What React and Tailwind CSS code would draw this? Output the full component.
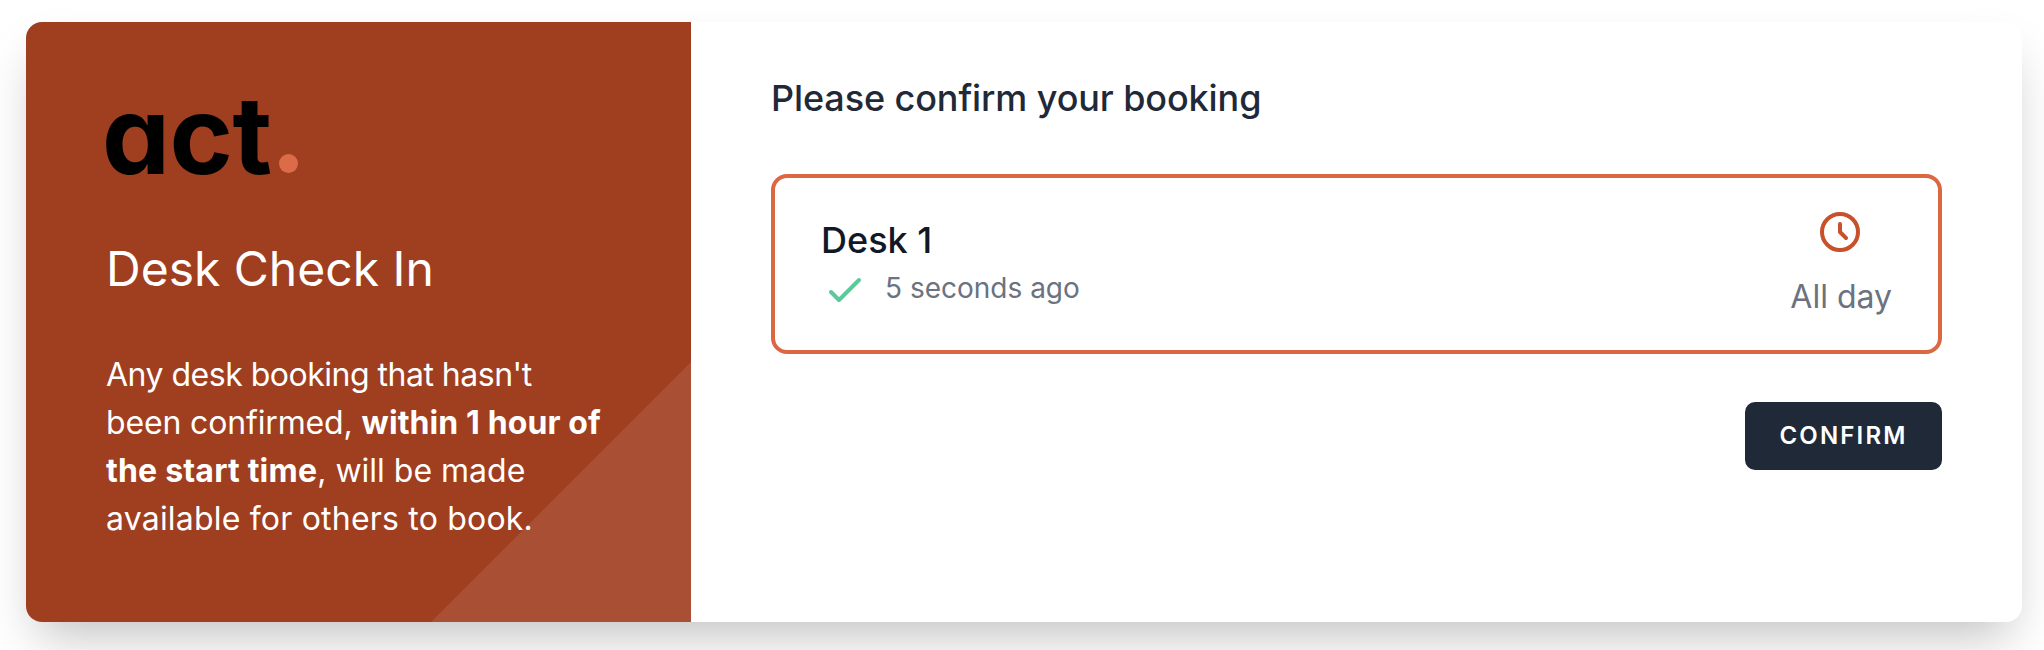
export default function App() {
  return (
    <div className="min-h-[650px] bg-white pt-[22px] pl-[26px] pr-[22px] font-['Inter',sans-serif] overflow-hidden">
      <div className="flex h-[600px] rounded-2xl bg-white shadow-[0_25px_50px_-12px_rgba(0,0,0,0.25)] overflow-hidden">
        {/* left panel */}
        <div className="relative w-[665px] shrink-0 bg-[#a03e20] pl-[80px] text-white">
          <svg className="absolute bottom-0 right-0" width="260" height="260" viewBox="0 0 260 260">
            <polygon points="0,260 260,0 260,260" fill="#a84f34" />
          </svg>
          <div className="relative">
            <div className="flex items-end h-[166px] ml-[-4px]">
              <span className="text-[108px] leading-[108px] font-bold text-black tracking-[-0.005em] [font-feature-settings:'cv11'] mb-[-1px]">act</span>
              <span className="ml-[7px] mb-[15px] h-[19px] w-[19px] rounded-full bg-[#dc6b4a]" />
            </div>
            <h1 className="mt-[53px] text-[48px] leading-[56px] font-normal">Desk Check In</h1>
            <p className="mt-[54px] w-[540px] text-[32px] leading-[48px]">
              <span className="tracking-[-0.5px]">Any desk booking that hasn't</span>
              <br />
              <span className="tracking-[-0.15px]">been confirmed,</span> <strong className="font-bold tracking-[0.1px]">within 1 hour of</strong>
              <br />
              <strong className="font-bold tracking-[0.2px]">the start time</strong>, will be made
              <br />
              <span className="tracking-[0.2px]">available for others to book.</span>
            </p>
          </div>
        </div>

        {/* right panel */}
        <div className="flex-1 flex flex-col pl-[80px] pr-[80px] pt-[52px]">
          <h2 className="text-[36px] leading-[48px] font-medium text-[#1f2937] tracking-[-0.1px]">Please confirm your booking</h2>
          <div className="mt-[52px] h-[180px] flex items-center justify-between rounded-2xl border-[4px] border-[#dc6843] pl-[46px] pr-[46px]">
            <div>
              <div className="mt-[3px] text-[36px] leading-[44px] font-medium text-[#111827]">Desk 1</div>
              <div className="flex items-center">
                <svg className="w-12 h-12 mt-[4px] text-[#5cc99b]" fill="none" viewBox="0 0 24 24" stroke="currentColor" strokeWidth="2" strokeLinecap="round" strokeLinejoin="round">
                  <path d="M5 13l4 4L19 7" />
                </svg>
                <span className="ml-[16px] mt-[1px] text-[28px] leading-[36px] text-[#6b7280]">5 seconds ago</span>
              </div>
            </div>
            <div className="flex flex-col items-center mt-[-2px]">
              <svg className="w-12 h-12 text-[#c8502a] mr-[2px]" fill="none" viewBox="0 0 24 24" stroke="currentColor" strokeWidth="2" strokeLinecap="round" strokeLinejoin="round">
                <path d="M12 8v4l3 3m6-3a9 9 0 11-18 0 9 9 0 0118 0z" />
              </svg>
              <span className="mt-[19px] text-[32px] leading-[44px] text-[#6b7280]">All day</span>
            </div>
          </div>
          <div className="mt-[48px] flex justify-end">
            <button className="h-[68px] w-[197px] rounded-[10px] bg-[#1f2937] text-[24px] font-semibold text-white tracking-[0.09em]">CONFIRM</button>
          </div>
        </div>
      </div>
    </div>
  );
}
